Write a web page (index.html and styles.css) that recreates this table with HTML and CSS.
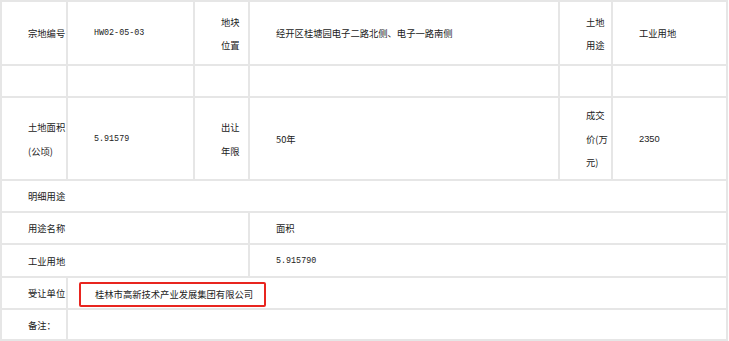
FILE: index.html
```html
<!DOCTYPE html>
<html lang="zh-CN">
<head>
<meta charset="utf-8">
<link rel="stylesheet" href="styles.css">
</head>
<body>
<table class="land">
  <colgroup>
    <col class="c1"><col class="c2"><col class="c3"><col class="c4"><col class="c5"><col class="c6">
  </colgroup>
  <tr class="r1">
    <td>宗地编号</td>
    <td class="mono">HW02-05-03</td>
    <td>地块<br>位置</td>
    <td>经开区桂塘园电子二路北侧、电子一路南侧</td>
    <td>土地<br>用途</td>
    <td>工业用地</td>
  </tr>
  <tr class="r2">
    <td></td><td></td><td></td><td></td><td></td><td></td>
  </tr>
  <tr class="r3">
    <td>土地面积<br>(公顷)</td>
    <td class="mono">5.91579</td>
    <td>出让<br>年限</td>
    <td>50年</td>
    <td>成交<br>价(万<br>元)</td>
    <td class="num">2350</td>
  </tr>
  <tr class="r4">
    <td colspan="6">明细用途</td>
  </tr>
  <tr class="r5">
    <td colspan="3">用途名称</td>
    <td colspan="3">面积</td>
  </tr>
  <tr class="r6">
    <td colspan="3">工业用地</td>
    <td colspan="3" class="mono">5.915790</td>
  </tr>
  <tr class="r7">
    <td>受让单位</td>
    <td colspan="5" class="company-cell"><span class="highlight">桂林市高新技术产业发展集团有限公司</span></td>
  </tr>
  <tr class="r8">
    <td>备注：</td>
    <td colspan="5"></td>
  </tr>
</table>
</body>
</html>
```

FILE: styles.css
```css
html, body {
  margin: 0;
  padding: 0;
  background: #ffffff;
}

body {
  font-family: "Noto Sans CJK SC", "Liberation Sans", sans-serif;
  font-size: 9.3px;
  color: #222222;
}

.land {
  table-layout: fixed;
  width: 728px;
  border-collapse: separate;
  border-spacing: 0;
  border-left: 2px solid #e6e6e6;
  border-top: 2px solid #e6e6e6;
}

.c1 { width: 66px; }
.c2 { width: 127px; }
.c3 { width: 55px; }
.c4 { width: 310px; }
.c5 { width: 53px; }
.c6 { width: 115px; }

.land td {
  border-right: 2px solid #e6e6e6;
  border-bottom: 2px solid #e6e6e6;
  padding: 2px 0 0 26px;
  vertical-align: middle;
  line-height: 23.5px;
  white-space: nowrap;
  overflow: hidden;
}

.r1 { height: 64px; }
.r2 { height: 32px; }
.r3 { height: 83px; }
.r4 { height: 32px; }
.r5 { height: 32px; }
.r6 { height: 33px; }
.r7 { height: 32px; }
.r8 { height: 31px; }

.mono {
  font-family: "Liberation Mono", monospace;
  font-size: 8.4px;
}

.num {
  font-family: "Liberation Sans", sans-serif;
}

.land td.company-cell {
  padding: 2px 0 0 11px;
}

.highlight {
  display: inline-block;
  box-sizing: border-box;
  width: 187px;
  height: 25px;
  padding-left: 14px;
  border: 2px solid #e8251f;
  border-radius: 2px;
  line-height: 21px;
  vertical-align: middle;
}
```
